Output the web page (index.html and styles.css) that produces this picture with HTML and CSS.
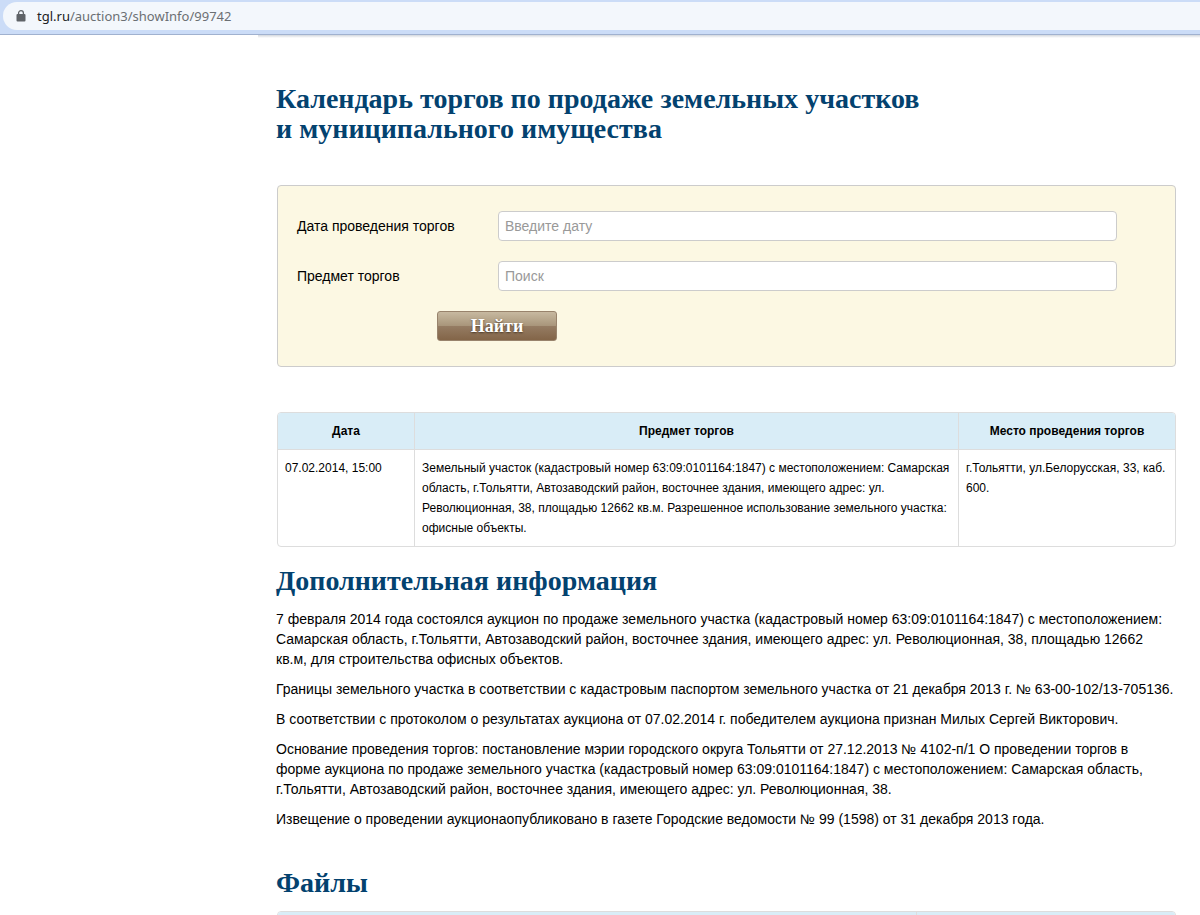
FILE: index.html
```html
<!DOCTYPE html>
<html lang="ru">
<head>
<meta charset="utf-8">
<title>Календарь торгов</title>
<link rel="stylesheet" href="styles.css">
</head>
<body>
<div class="window">
  <header class="toolbar">
    <div class="address">
      <svg class="lock" viewBox="0 0 10 12" aria-hidden="true"><path d="M2.6 5V3.1a2.4 2.4 0 0 1 4.8 0V5" fill="none" stroke="#5f6368" stroke-width="1.3"/><rect x="0.5" y="4" width="9" height="7.6" rx="1" fill="#5f6368"/></svg>
      <span class="url"><span class="host">tgl.ru</span>/auction3/showInfo/99742</span>
    </div>
  </header>
  <main class="content">
    <div class="shade"></div>
    <h1 class="title">Календарь торгов по продаже земельных участков<br>и муниципального имущества</h1>
    <form class="search">
      <div class="field">
        <label class="label" for="date">Дата проведения торгов</label>
        <input class="input" id="date" type="text" placeholder="Введите дату">
      </div>
      <div class="field">
        <label class="label" for="subject">Предмет торгов</label>
        <input class="input" id="subject" type="text" placeholder="Поиск">
      </div>
      <button class="submit" type="button">Найти</button>
    </form>
    <table class="table auction">
      <colgroup><col class="col-date"><col><col class="col-place"></colgroup>
      <thead>
        <tr><th>Дата</th><th>Предмет торгов</th><th>Место проведения торгов</th></tr>
      </thead>
      <tbody>
        <tr>
          <td>07.02.2014, 15:00</td>
          <td>Земельный участок (кадастровый номер 63:09:0101164:1847) с местоположением: Самарская область, г.Тольятти, Автозаводский район, восточнее здания, имеющего адрес: ул. Революционная, 38, площадью 12662 кв.м. Разрешенное использование земельного участка: офисные объекты.</td>
          <td>г.Тольятти, ул.Белорусская, 33, каб. 600.</td>
        </tr>
      </tbody>
    </table>
    <section class="info">
      <h2 class="title">Дополнительная информация</h2>
      <p>7 февраля 2014 года состоялся аукцион по продаже земельного участка (кадастровый номер 63:09:0101164:1847) с местоположением: Самарская область, г.Тольятти, Автозаводский район, восточнее здания, имеющего адрес: ул. Революционная, 38, площадью 12662 кв.м, для строительства офисных объектов.</p>
      <p>Границы земельного участка в соответствии с кадастровым паспортом земельного участка от 21 декабря 2013 г. № 63-00-102/13-705136.</p>
      <p>В соответствии с протоколом о результатах аукциона от 07.02.2014 г. победителем аукциона признан Милых Сергей Викторович.</p>
      <p>Основание проведения торгов: постановление мэрии городского округа Тольятти от 27.12.2013 № 4102-п/1 О проведении торгов в форме аукциона по продаже земельного участка (кадастровый номер 63:09:0101164:1847) с местоположением: Самарская область, г.Тольятти, Автозаводский район, восточнее здания, имеющего адрес: ул. Революционная, 38.</p>
      <p>Извещение о проведении аукционаопубликовано в газете Городские ведомости № 99 (1598) от 31 декабря 2013 года.</p>
    </section>
    <section class="files">
      <h2 class="title">Файлы</h2>
      <table class="table">
        <colgroup><col><col class="col-file"></colgroup>
        <thead><tr><th></th><th></th></tr></thead>
      </table>
    </section>
  </main>
</div>
</body>
</html>
```

FILE: styles.css
```css
* { box-sizing: border-box; }

body {
  margin: 0;
  background: #fff;
  color: #000;
  font: 14px/20px "Liberation Sans", Arial, sans-serif;
}

.window {
  height: 100vh;
  overflow: hidden;
}

.toolbar {
  padding: 2px 0 4px 3px;
  background: #cbdcf7;
  border-bottom: 1px solid #a0b1cf;
}

.address {
  display: flex;
  align-items: center;
  gap: 11px;
  height: 28px;
  padding-left: 13px;
  background: #f3f7fc;
  border-radius: 14px 0 0 14px;
}

.lock {
  width: 10px;
  height: 12px;
}

.url {
  color: #6b6f73;
  font-family: "Noto Sans", "Open Sans", sans-serif;
  font-size: 13px;
}

.host { color: #202124; }

.content {
  padding: 0 24px 0 23%;
}

.shade {
  height: 3px;
  margin: 0 -24px 0 -18px;
  background: linear-gradient(#d3d7dd, #fff);
}

.title {
  margin: 0;
  color: #03426f;
  font: bold 28px/30px Gelasio, Georgia, "Liberation Serif", serif;
}

h1.title { margin-top: 47px; }

.search {
  margin: 40px 0 0 1px;
  padding: 25px 58px 25px 19px;
  background: #fcf8e3;
  border: 1px solid #ccc;
  border-radius: 4px;
}

.field {
  display: flex;
  align-items: center;
  margin-bottom: 20px;
}

.label {
  flex: none;
  width: 201px;
}

.input {
  flex: 1;
  min-width: 0;
  height: 30px;
  padding: 4px 6px;
  border: 1px solid #ccc;
  border-radius: 4px;
  background: #fff;
  font: inherit;
}

.input::placeholder { color: #999; }

.submit {
  display: block;
  width: 120px;
  height: 30px;
  margin-left: 140px;
  padding: 0;
  border: 1px solid #98836c;
  border-radius: 3px;
  background: linear-gradient(#c7b9a0, #a8957a 50%, #957c63 50%, #836548);
  color: #fff;
  font: bold 18px/28px "Liberation Serif", serif;
  text-shadow: 0 1px 2px #4a3828;
}

.table {
  width: calc(100% - 1px);
  margin-left: 1px;
  table-layout: fixed;
  border-collapse: separate;
  border-spacing: 0;
  border: 1px solid #ddd;
  border-radius: 4px;
  overflow: hidden;
  font-size: 12px;
}

.auction { margin-top: 45px; }

.col-date { width: 136px; }
.col-place { width: 217px; }
.col-file { width: 259px; }

.table th {
  height: 36px;
  padding: 8px;
  background: #d9edf7;
  text-align: center;
}

.table td {
  padding: 8px 7px;
  border-top: 1px solid #ddd;
  vertical-align: top;
}

.table th + th,
.table td + td { border-left: 1px solid #ddd; }

.info { margin-top: 20px; }

.info p { margin: 0 0 10px; }

.info .title { margin-bottom: 12px; }

.files { margin-top: 40px; }

.files .title { margin-bottom: 12px; }
```
